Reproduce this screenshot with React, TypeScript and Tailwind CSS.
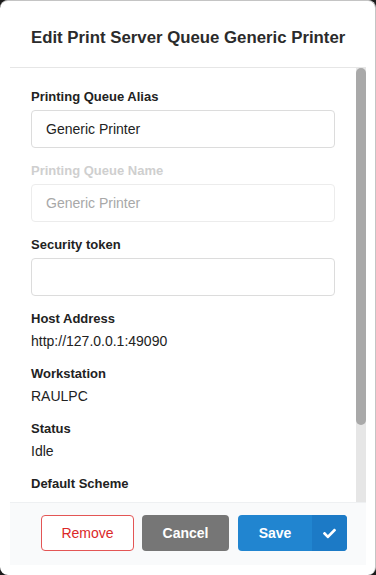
import React from "react";
import { FaCheck } from "react-icons/fa";

const inputBase =
  "h-[38px] w-full rounded-[4px] border px-[14px] text-[14px] outline-none";

function Field({
  label,
  value,
  disabled,
}: {
  label: string;
  value: string;
  disabled?: boolean;
}) {
  return (
    <div className="mb-[14px]">
      <div
        className={`mb-[5px] text-[13px] font-bold leading-[17px] ${
          disabled ? "text-[#cfcfcf]" : "text-[#222]"
        }`}
      >
        {label}
      </div>
      <input
        readOnly
        value={value}
        className={`${inputBase} ${
          disabled
            ? "border-[#ececec] text-[#a8a8a8]"
            : "border-[#dcdcdc] text-[#222]"
        }`}
      />
    </div>
  );
}

function Info({ label, value }: { label: string; value: string }) {
  return (
    <div className="mb-[15px]">
      <div className="mb-[5px] text-[13px] font-bold leading-[17px] text-[#222]">
        {label}
      </div>
      <div className="text-[14px] leading-[18px] text-[#222]">{value}</div>
    </div>
  );
}

export default function App() {
  return (
    <div className="h-[575px] w-[376px] overflow-hidden bg-[#1b1b1b] font-['Liberation_Sans',Arial,sans-serif]">
      <div className="flex h-[575px] w-[376px] flex-col rounded-[8px] border-t border-r border-[#c4c4c4] bg-white pl-[10px] pr-[9px]">
        {/* Header */}
        <div className="h-[67px] shrink-0 whitespace-nowrap border-b border-[#e6e6e6] px-[21px] pt-[26px] text-[16.8px] font-bold leading-[22px] text-[#2b2b2b]">
          Edit Print Server Queue Generic Printer
        </div>

        {/* Body + scrollbar */}
        <div className="flex min-h-0 flex-1">
          <div className="min-w-0 flex-1 overflow-hidden">
            <div className="px-[21px] pt-[20px]">
              <Field label="Printing Queue Alias" value="Generic Printer" />
              <Field label="Printing Queue Name" value="Generic Printer" disabled />
              <Field label="Security token" value="" />
              <Info label="Host Address" value="http://127.0.0.1:49090" />
              <Info label="Workstation" value="RAULPC" />
              <Info label="Status" value="Idle" />
              <div className="text-[13px] font-bold leading-[17px] text-[#222]">
                Default Scheme
              </div>
            </div>
          </div>
          <div className="w-[10px] shrink-0 bg-[#e6e6e6]">
            <div className="h-[357px] rounded-[5px] bg-[#a9a9a9]" />
          </div>
        </div>

        {/* Footer */}
        <div className="flex h-[63px] shrink-0 items-start justify-end gap-[8px] border-t border-[#eef0f2] bg-[#f9fafb] pt-[12px] pr-[19px]">
          <button className="h-[36px] w-[93px] rounded-[4px] border border-[#e35555] bg-white text-[14px] text-[#db2828]">
            Remove
          </button>
          <button className="h-[36px] w-[87px] rounded-[4px] bg-[#767676] text-[14px] font-bold text-white">
            Cancel
          </button>
          <button className="ml-[1px] flex h-[36px] w-[109px] overflow-hidden rounded-[4px] bg-[#2185d0] text-[14px] font-bold text-white">
            <span className="flex h-full flex-1 items-center justify-center">
              Save
            </span>
            <span className="flex h-full w-[35px] items-center justify-center bg-[#1c7ac6]">
              <FaCheck className="h-[13px] w-[13px]" />
            </span>
          </button>
        </div>
        <div className="h-[10px] shrink-0" />
      </div>
    </div>
  );
}
